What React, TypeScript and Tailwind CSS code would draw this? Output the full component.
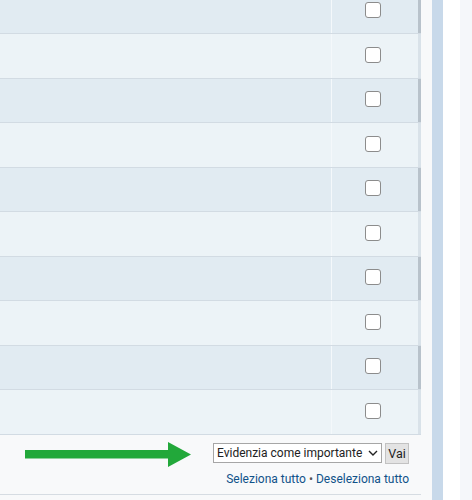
import React from 'react';

const ROW_HEIGHTS = [45, 45, 44, 45, 44, 45, 44, 45, 44, 45];

function Row({ height, dark }: { height: number; dark: boolean }) {
  return (
    <div
      className={
        dark
          ? 'flex border-b border-[#d2dbe3] bg-[#e1ebf2]'
          : 'flex border-b border-[#d2dbe3] bg-[#ecf3f7]'
      }
      style={{ height }}
    >
      <div className="w-[332px] flex-none border-r border-[#f4f8fb]" />
      <div
        className={
          dark
            ? 'flex flex-1 items-center border-r-[3px] border-[#b8c2cb] pb-[3px] pl-[33px]'
            : 'flex flex-1 items-center border-r-[3px] border-[#d9e2e9] pb-[3px] pl-[33px]'
        }
      >
        <input
          type="checkbox"
          className="m-0 h-4 w-4 appearance-none rounded-[3px] border-[1.5px] border-[#8c8c8c] bg-white"
        />
      </div>
    </div>
  );
}

export default function App() {
  return (
    <div className="flex h-[500px] w-[472px] overflow-hidden bg-[#f5f7fa] font-['Roboto',sans-serif]">
      <div className="flex w-[421px] flex-none flex-col bg-[#f8f9fa]">
        <div className="-mt-[11px]">
          {ROW_HEIGHTS.map((h, i) => (
            <Row key={i} height={h} dark={i % 2 === 0} />
          ))}
        </div>

        <div className="flex h-[60px] flex-none flex-col border-b border-[#d6dce2] pr-[12px] pt-[7px]">
          <div className="flex items-start">
            <svg width="167" height="26" viewBox="0 0 167 26" className="ml-[25px] flex-none">
              <polygon points="0,8 143,8 143,0 166,12.5 143,25 143,16.5 0,16.5" fill="#22a83a" />
            </svg>
            <div className="ml-auto mt-[1px] flex items-start gap-[3px]">
              <div className="relative">
                <select className="block h-[20px] w-[169px] appearance-none rounded-none border border-[#a6a6a6] bg-white pl-[3px] text-[12px] leading-[18px] text-[#222]">
                  <option>Evidenzia come importante</option>
                </select>
                <svg
                  width="10"
                  height="6"
                  viewBox="0 0 10 6"
                  className="pointer-events-none absolute right-[4px] top-[7px]"
                >
                  <path d="M1 1l4 4 4-4" fill="none" stroke="#222" strokeWidth="1.4" />
                </svg>
              </div>
              <button className="h-[21px] w-[24px] border border-[#c2c2c2] bg-[#e3e3e3] text-[12.5px] leading-[19px] text-[#222]">
                Vai
              </button>
            </div>
          </div>
          <div className="mt-[3px] text-right text-[12px] leading-[16px] text-[#105289]">
            <a>Seleziona tutto</a>
            <span className="text-[#555]"> • </span>
            <a>Deseleziona tutto</a>
          </div>
        </div>
      </div>
      <div className="w-[11px] flex-none bg-[#f8f9fa]" />
      <div className="w-[11px] flex-none bg-[#c8d9ea]" />
      <div className="w-[17px] flex-none bg-white" />
      <div className="flex-1 bg-[#f5f7fa]" />
    </div>
  );
}
